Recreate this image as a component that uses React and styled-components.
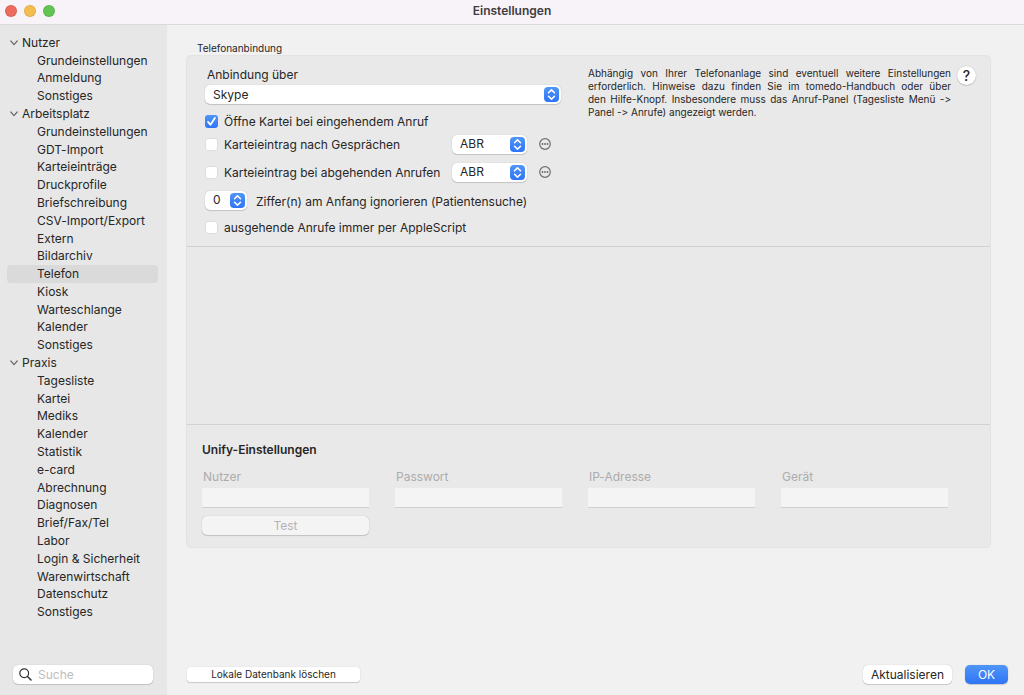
import React, { useState } from "react";
import styled, { createGlobalStyle } from "styled-components";

const tree = [
    { name: "Nutzer", items: ["Grundeinstellungen", "Anmeldung", "Sonstiges"] },
    {
        name: "Arbeitsplatz",
        items: ["Grundeinstellungen", "GDT-Import", "Karteieinträge", "Druckprofile", "Briefschreibung", "CSV-Import/Export", "Extern", "Bildarchiv", "Telefon", "Kiosk", "Warteschlange", "Kalender", "Sonstiges"]
    },
    {
        name: "Praxis",
        items: ["Tagesliste", "Kartei", "Mediks", "Kalender", "Statistik", "e-card", "Abrechnung", "Diagnosen", "Brief/Fax/Tel", "Labor", "Login & Sicherheit", "Warenwirtschaft", "Datenschutz", "Sonstiges"]
    }
];

const unifyFields = [
    { id: "nutzer", label: "Nutzer" },
    { id: "passwort", label: "Passwort", type: "password" },
    { id: "ip", label: "IP-Adresse" },
    { id: "geraet", label: "Gerät" }
];

const PopUp = ({ options, width, ...rest }) => (
    <PopUpBox $width={width}>
        <PopUpSelect {...rest}>
            {options.map(option => <option key={option}>{option}</option>)}
        </PopUpSelect>
        <PopUpArrows viewBox="0 0 15 15" aria-hidden="true">
            <path d="M4.5 5.8 L7.5 2.9 L10.5 5.8 M4.5 9.2 L7.5 12.1 L10.5 9.2" />
        </PopUpArrows>
    </PopUpBox>
);

const Check = ({ children, defaultChecked }) => (
    <CheckLabel>
        <CheckMark>
            <CheckInput type="checkbox" defaultChecked={defaultChecked} />
            <svg viewBox="0 0 13 13" aria-hidden="true">
                <path d="M3 6.9 L5.4 9.8 L9.9 3" />
            </svg>
        </CheckMark>
        {children}
    </CheckLabel>
);

const MoreButton = () => (
    <IconButton type="button" aria-label="Mehr">
        <svg width="12" height="12" viewBox="0 0 12 12">
            <circle cx="6" cy="6" r="5.3" fill="none" stroke="#6f6f6f" strokeWidth="1.2" />
            <circle cx="3.5" cy="6" r="0.9" fill="#666" />
            <circle cx="6" cy="6" r="0.9" fill="#666" />
            <circle cx="8.5" cy="6" r="0.9" fill="#666" />
        </svg>
    </IconButton>
);

const Sidebar = () => {
    const [selected, setSelected] = useState("Arbeitsplatz/Telefon");
    return (
        <Side>
            <Tree aria-label="Einstellungen">
                {tree.map(group => (
                    <React.Fragment key={group.name}>
                        <GroupRow type="button" aria-expanded="true">
                            <svg width="8" height="6" viewBox="0 0 8 6">
                                <path d="M0.8 1 L4 4.6 L7.2 1" fill="none" stroke="#6c6c6c" strokeWidth="1.2" strokeLinecap="round" strokeLinejoin="round" />
                            </svg>
                            {group.name}
                        </GroupRow>
                        {group.items.map(item => {
                            const id = `${group.name}/${item}`;
                            return (
                                <ItemRow key={id} type="button" $active={id === selected} onClick={() => setSelected(id)}>
                                    {item}
                                </ItemRow>
                            );
                        })}
                    </React.Fragment>
                ))}
            </Tree>
            <Search>
                <svg width="13" height="13" viewBox="0 0 13 13" aria-hidden="true">
                    <circle cx="5.2" cy="5.2" r="4.4" fill="none" stroke="#333" strokeWidth="1.2" />
                    <path d="M8.5 8.5 L12 12" stroke="#333" strokeWidth="1.5" strokeLinecap="round" />
                </svg>
                <input type="search" placeholder="Suche" aria-label="Suche" />
            </Search>
        </Side>
    );
};

const App = () => (
    <Window>
        <GlobalStyle />
        <TitleBar>
            <Lights>
                <Light type="button" aria-label="Schließen" $color="#ed6a5e" />
                <Light type="button" aria-label="Minimieren" $color="#f4bd4f" />
                <Light type="button" aria-label="Vergrößern" $color="#61c554" />
            </Lights>
            <h1>Einstellungen</h1>
        </TitleBar>
        <Body>
            <Sidebar />
            <Main>
                <Caption>Telefonanbindung</Caption>
                <Box>
                    <Connection>
                        <Form>
                            <FieldName htmlFor="anbindung">Anbindung über</FieldName>
                            <PopUp id="anbindung" options={["Skype"]} />
                            <Row $height={18} $first>
                                <Check defaultChecked>Öffne Kartei bei eingehendem Anruf</Check>
                            </Row>
                            <Row $height={28}>
                                <Check>Karteieintrag nach Gesprächen</Check>
                                <PopUp width={75} aria-label="Typ nach Gesprächen" options={["ABR"]} />
                                <MoreButton />
                            </Row>
                            <Row $height={28}>
                                <Check>Karteieintrag bei abgehenden Anrufen</Check>
                                <PopUp width={75} aria-label="Typ bei abgehenden Anrufen" options={["ABR"]} />
                                <MoreButton />
                            </Row>
                            <Row $height={28}>
                                <PopUp width={42} id="ziffern" options={["0", "1", "2", "3"]} />
                                <DigitsLabel htmlFor="ziffern">Ziffer(n) am Anfang ignorieren (Patientensuche)</DigitsLabel>
                            </Row>
                            <Row $height={26}>
                                <Check>ausgehende Anrufe immer per AppleScript</Check>
                            </Row>
                        </Form>
                        <Hint>
                            Abhängig von Ihrer Telefonanlage sind eventuell weitere Einstellungen erforderlich. Hinweise dazu finden Sie im tomedo-Handbuch oder über den&nbsp;Hilfe-Knopf. Insbesondere muss das Anruf-Panel (Tagesliste Menü -&gt; Panel&nbsp;-&gt;&nbsp;Anrufe) angezeigt werden.
                        </Hint>
                        <HelpButton type="button">?</HelpButton>
                    </Connection>
                    <EmptySection />
                    <Unify>
                        <h2>Unify-Einstellungen</h2>
                        <UnifyGrid>
                            {unifyFields.map(field => (
                                <UnifyField key={field.id}>
                                    <label htmlFor={field.id}>{field.label}</label>
                                    <input id={field.id} type={field.type || "text"} disabled />
                                </UnifyField>
                            ))}
                            <Button type="button" disabled>Test</Button>
                        </UnifyGrid>
                    </Unify>
                </Box>
                <Footer>
                    <Button type="button" $small>Lokale Datenbank löschen</Button>
                    <Actions>
                        <Button type="button">Aktualisieren</Button>
                        <Button type="button" $primary>OK</Button>
                    </Actions>
                </Footer>
            </Main>
        </Body>
    </Window>
);

//Design
const GlobalStyle = createGlobalStyle`
    * {
        box-sizing: border-box;
    }
    body {
        margin: 0;
        background: #f1f1f1;
        color: #262626;
        font-family: Inter, "Liberation Sans", sans-serif;
        font-size: 12px;
        font-variant-ligatures: none;
    }
    button, input, select {
        font: inherit;
        color: inherit;
    }
    h1, h2 {
        margin: 0;
        font-size: 12px;
        font-weight: 600;
    }
    svg {
        flex: none;
        display: block;
    }
`;
const Window = styled.div`
    display: flex;
    flex-direction: column;
    min-height: 100vh;
`;
const TitleBar = styled.header`
    display: grid;
    grid-template-columns: 1fr auto 1fr;
    align-items: center;
    height: 25px;
    padding: 0 5px 2px;
    background: #f8f2f9;
    border-bottom: 1px solid #dcd8dc;
    h1 {
        padding-bottom: 2px;
        color: #3f3c40;
    }
`;
const Lights = styled.div`
    display: flex;
    gap: 7px;
`;
const Light = styled.button`
    width: 12px;
    height: 12px;
    padding: 0;
    border: 1px solid rgba(0, 0, 0, 0.08);
    border-radius: 50%;
    background: ${props => props.$color};
`;
const Body = styled.div`
    display: flex;
    flex: 1;
`;
const Side = styled.aside`
    display: flex;
    flex-direction: column;
    width: 167px;
    padding: 9px 9px 11px 7px;
    background: #e7e7e7;
`;
//rows share the height that the search field leaves free
const Tree = styled.nav`
    display: grid;
    grid-auto-rows: 1fr;
    flex: 1;
    margin-bottom: 44px;
`;
const TreeRow = styled.button`
    display: flex;
    align-items: center;
    min-height: 16px;
    border: 0;
    border-radius: 4px;
    background: none;
    line-height: 16px;
    text-align: left;
`;
const GroupRow = styled(TreeRow)`
    gap: 4px;
    padding: 0 3px;
`;
const ItemRow = styled(TreeRow)`
    padding: 0 0 0 30px;
    background: ${props => props.$active ? "#dadada" : "none"};
`;
const Search = styled.div`
    display: flex;
    align-items: center;
    gap: 6px;
    height: 19px;
    margin: 0 5px 0 6px;
    padding: 0 6px;
    border-radius: 5px;
    background: #fff;
    box-shadow: 0 0 1px rgba(0, 0, 0, 0.25), 0 1px 1px rgba(0, 0, 0, 0.15);
    input {
        flex: 1;
        min-width: 0;
        padding: 0;
        border: 0;
        outline: 0;
        background: none;
    }
    input::placeholder {
        color: #bdbdbd;
    }
`;
const Main = styled.main`
    display: flex;
    flex-direction: column;
    flex: 1;
    padding: 16px 16px 11px 19px;
`;
const Caption = styled.div`
    padding-left: 11px;
    font-size: 10px;
    line-height: 14px;
`;
const Box = styled.section`
    margin-right: 17px;
    border: 1px solid #e3e3e3;
    border-radius: 5px;
    background: #e9e9e9;
`;
const Connection = styled.div`
    display: flex;
    align-items: flex-start;
    padding: 8px 14px 6px 18px;
`;
const Form = styled.div`
    flex: 0 0 356px;
    margin-right: 27px;
`;
const FieldName = styled.label`
    display: block;
    padding-left: 2px;
    line-height: 21px;
`;
const Row = styled.div`
    display: flex;
    align-items: center;
    height: ${props => props.$height}px;
    margin-top: ${props => props.$first ? 8 : 0}px;
`;
const PopUpBox = styled.div`
    position: relative;
    flex: none;
    width: ${props => props.$width ? `${props.$width}px` : "100%"};
`;
const PopUpSelect = styled.select`
    display: block;
    width: 100%;
    height: 19px;
    padding: 0 18px 1px 8px;
    appearance: none;
    border: 0;
    border-radius: 5px;
    background: #fff;
    box-shadow: 0 0 1px rgba(0, 0, 0, 0.25), 0 1px 1px rgba(0, 0, 0, 0.15);
`;
const PopUpArrows = styled.svg`
    position: absolute;
    top: 2px;
    right: 2px;
    width: 15px;
    height: 15px;
    border-radius: 4px;
    background: linear-gradient(#4f96f8, #2f74f5);
    pointer-events: none;
    path {
        fill: none;
        stroke: #fff;
        stroke-width: 1.5;
        stroke-linecap: round;
        stroke-linejoin: round;
    }
`;
const CheckLabel = styled.label`
    display: flex;
    align-items: center;
    gap: 6px;
    width: 247px;
    white-space: nowrap;
`;
const CheckMark = styled.span`
    display: grid;
    width: 13px;
    height: 13px;
    > * {
        grid-area: 1 / 1;
    }
    svg {
        pointer-events: none;
    }
    path {
        fill: none;
        stroke: #fff;
        stroke-width: 1.8;
        stroke-linecap: round;
        stroke-linejoin: round;
    }
`;
const CheckInput = styled.input`
    width: 13px;
    height: 13px;
    margin: 0;
    appearance: none;
    border: 1px solid #dedede;
    border-radius: 3px;
    background: #fff;
    &:checked {
        border: 0;
        background: linear-gradient(#4f96f8, #2f74f5);
    }
`;
const IconButton = styled.button`
    margin-left: 12px;
    padding: 0;
    border: 0;
    background: none;
`;
const DigitsLabel = styled.label`
    padding: 2px 0 0 9px;
    white-space: nowrap;
`;
const Hint = styled.p`
    flex: 1;
    margin: 3px 6px 0 0;
    font-size: 10px;
    line-height: 13px;
    text-align: justify;
`;
const HelpButton = styled.button`
    width: 19px;
    height: 19px;
    margin-top: 2px;
    padding: 0;
    border: 0;
    border-radius: 50%;
    background: #fff;
    box-shadow: 0 0 1px rgba(0, 0, 0, 0.25), 0 1px 1px rgba(0, 0, 0, 0.15);
    font-size: 14px;
    font-weight: 500;
    line-height: 19px;
`;
const EmptySection = styled.div`
    height: 179px;
    border: solid #d2d2d2;
    border-width: 1px 0;
`;
const Unify = styled.div`
    padding: 16px 42px 12px 15px;
    h2 {
        line-height: 18px;
    }
`;
const UnifyGrid = styled.div`
    display: grid;
    grid-template-columns: repeat(4, 1fr);
    gap: 8px 26px;
    margin-top: 9px;
`;
const UnifyField = styled.div`
    display: flex;
    flex-direction: column;
    label {
        padding: 0 0 2px 1px;
        color: #acacac;
        line-height: 18px;
    }
    input {
        width: 100%;
        height: 20px;
        border: 0;
        border-bottom: 1px solid #d0d0d0;
        background: #f4f4f4;
    }
`;
const Button = styled.button`
    height: ${props => props.$small ? 15 : 19}px;
    min-width: ${props => props.$small ? 173 : 43}px;
    padding: 0 8px;
    border: 0;
    border-radius: ${props => props.$small ? 3 : 5}px;
    background: ${props => props.$primary ? "linear-gradient(#4f96f8, #2f74f5)" : "#fff"};
    box-shadow: 0 0 1px rgba(0, 0, 0, 0.25), 0 1px 1px rgba(0, 0, 0, 0.15);
    color: ${props => props.$primary ? "#fff" : "#262626"};
    font-size: ${props => props.$small ? 10 : 12}px;
    line-height: 15px;
    &:disabled {
        background: #f4f4f4;
        color: #b4b4b4;
    }
`;
const Footer = styled.footer`
    display: flex;
    align-items: center;
    justify-content: space-between;
    margin-top: auto;
    padding-left: 1px;
`;
const Actions = styled.div`
    display: flex;
    gap: 13px;
`;
export default App;
